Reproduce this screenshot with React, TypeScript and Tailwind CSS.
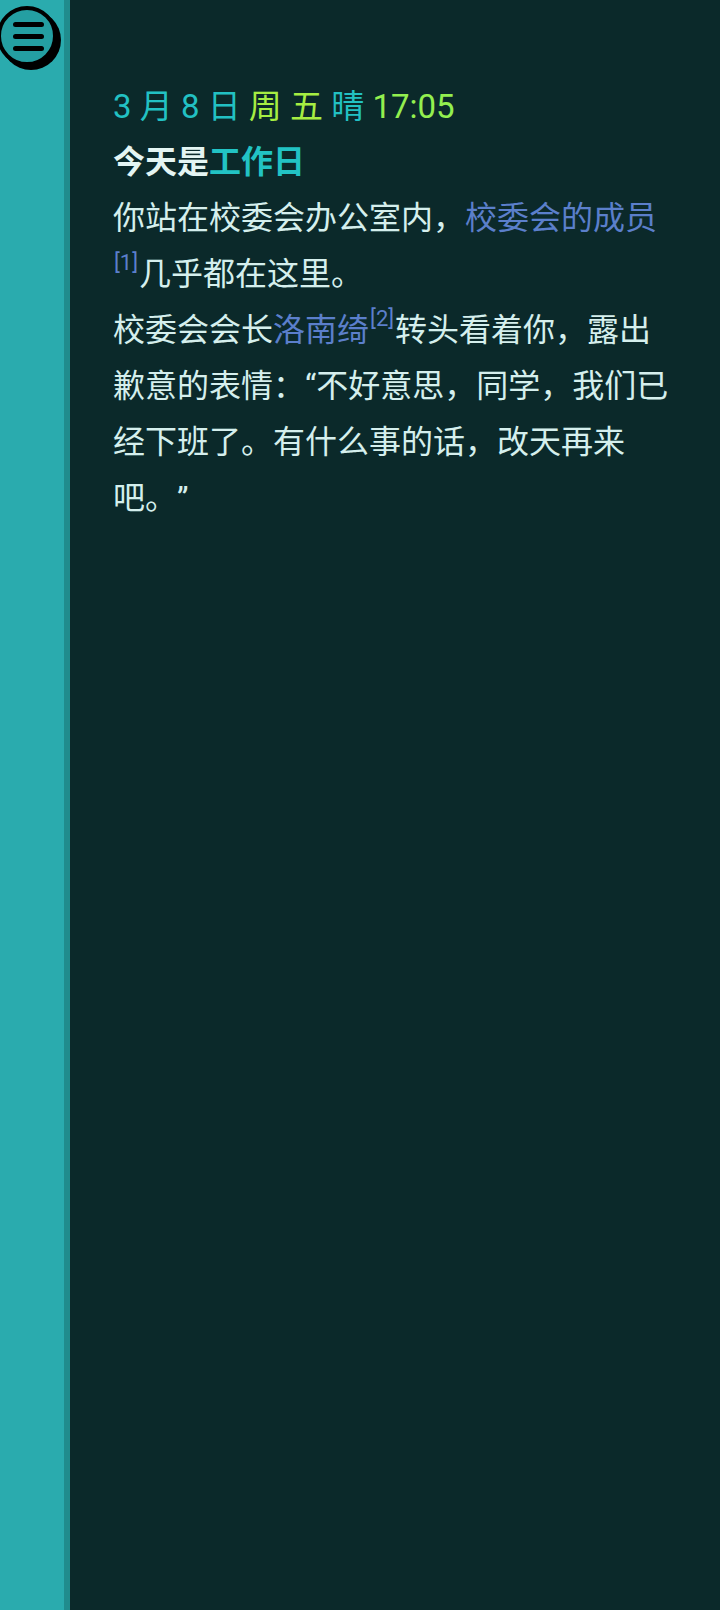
const FONT = 'Roboto, "Noto Sans CJK SC", "Noto Sans", sans-serif';

function Ref({ n }: { n: number }) {
  return (
    <sup className="text-[22px] leading-none top-[-15px] text-[#5b7fcb] mx-[1px]">
      [{n}]
    </sup>
  );
}

function MenuButton() {
  return (
    <button
      aria-label="menu"
      className="absolute left-[-3px] top-[6px] w-[60px] h-[60px] rounded-full border-[4px] border-black bg-[#249fa2] shadow-[4px_4px_0_0_#000] flex flex-col items-center justify-center gap-[7px] pl-[3px]"
    >
      <span className="block w-[31px] h-[5px] rounded-full bg-black" />
      <span className="block w-[31px] h-[5px] rounded-full bg-black" />
      <span className="block w-[31px] h-[5px] rounded-full bg-black" />
    </button>
  );
}

export default function App() {
  return (
    <div className="flex w-full h-[1610px] overflow-hidden" style={{ fontFamily: FONT }}>
      <aside className="relative w-[64px] shrink-0 bg-[#2aabae]">
        <MenuButton />
      </aside>
      <div className="w-[6px] shrink-0 bg-[#208c8d]" />
      <main className="flex-1 bg-[#0b292a] pt-[80px] pl-[43px] pr-[43px] text-[32px] text-[#d5efed] [text-spacing-trim:space-all]">
        <div className="text-[33px] leading-[54px] text-[#22c1c3]">
          3 月 8 日 <span className="text-[#a6ee42]">周 五</span> 晴{' '}
          <span className="text-[#93ef4f]">17:05</span>
        </div>
        <div className="leading-[56px] font-bold text-[#e4f5f3]">
          今天是<span className="text-[#22c3c4]">工作日</span>
        </div>
        <div className="leading-[56px]">
          <p>
            你站在校委会办公室内，<span className="text-[#5b7fcb]">校委会的成员</span>
            <Ref n={1} />
            几乎都在这里。
          </p>
          <p>
            校委会会长<span className="text-[#5b7fcb]">洛南绮</span>
            <Ref n={2} />
            转头看着你，露出歉意的表情：“不好意思，同学，我们已经下班了。有什么事的话，改天再来吧。”
          </p>
        </div>
      </main>
    </div>
  );
}
